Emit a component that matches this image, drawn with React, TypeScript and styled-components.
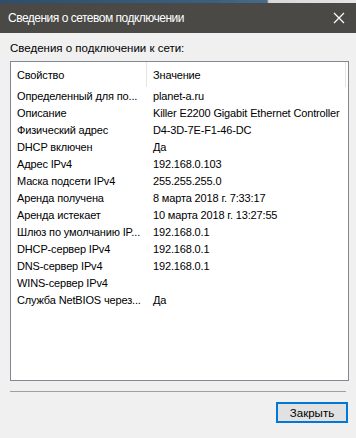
import styled, { createGlobalStyle } from "styled-components";

const GlobalStyle = createGlobalStyle`
    html, body {
        margin: 0;
        padding: 0;
        background: #f0f0f0;
    }
    body {
        font-family: "Liberation Sans", Arial, sans-serif;
    }
`;

const Window = styled.div`
    width: 356px;
    height: 438px;
    display: flex;
    flex-direction: column;
    background: #f0f0f0;
    overflow: hidden;
`;

const TopStrip = styled.div`
    height: 3px;
    background: linear-gradient(to right, #2d4e6e 0%, #3c5f80 60%, #4a6a88 75%, #d8d8d8 75.5%, #e6e6e6 100%);
`;

const TitleBar = styled.div`
    height: 30px;
    background: #4a4946;
    color: #ffffff;
    display: flex;
    flex-direction: row;
    align-items: center;
    justify-content: space-between;
    padding: 0 7px 0 8px;
    font-size: 12px;
    letter-spacing: -0.5px;
`;

const CloseBtn = styled.div`
    width: 20px;
    height: 20px;
    display: flex;
    align-items: center;
    justify-content: center;
`;

const Body = styled.div`
    flex: 1;
    display: flex;
    flex-direction: column;
    padding: 9px 7px 0 10px;
`;

const Caption = styled.div`
    font-size: 11.5px;
    color: #000;
    height: 19px;
`;

const ListBox = styled.div`
    height: 320px;
    background: #ffffff;
    border: 1px solid #828790;
    box-sizing: border-box;
    width: 339px;
    display: flex;
    flex-direction: column;
`;

const Row = styled.div<{ $header?: boolean }>`
    display: flex;
    flex-direction: row;
    height: ${(p) => (p.$header ? "25px" : "17px")};
    align-items: center;
    font-size: 11px;
    letter-spacing: -0.15px;
    color: #000;
`;

const Cell = styled.div<{ $w: number; $header?: boolean }>`
    width: ${(p) => p.$w}px;
    height: 100%;
    box-sizing: border-box;
    padding-left: 6px;
    display: flex;
    align-items: center;
    white-space: nowrap;
    overflow: hidden;
    border-right: ${(p) => (p.$header ? "1px solid #e5e5e5" : "none")};
`;

const Separator = styled.div`
    height: 1px;
    width: 336px;
    background: #a0a0a0;
    margin-top: 10px;
`;

const Footer = styled.div`
    display: flex;
    flex-direction: row;
    justify-content: flex-end;
    padding-top: 10px;
    padding-right: 1px;
`;

const Button = styled.button`
    width: 72px;
    height: 21px;
    box-sizing: border-box;
    border: 2px solid #0078d7;
    background: #e1e1e1;
    font-family: "Liberation Sans", Arial, sans-serif;
    font-size: 11.5px;
    color: #000;
    padding: 0;
    display: flex;
    align-items: center;
    justify-content: center;
`;

const rows: [string, string][] = [
    ["Определенный для по...", "planet-a.ru"],
    ["Описание", "Killer E2200 Gigabit Ethernet Controller"],
    ["Физический адрес", "D4-3D-7E-F1-46-DC"],
    ["DHCP включен", "Да"],
    ["Адрес IPv4", "192.168.0.103"],
    ["Маска подсети IPv4", "255.255.255.0"],
    ["Аренда получена", "8 марта 2018 г. 7:33:17"],
    ["Аренда истекает", "10 марта 2018 г. 13:27:55"],
    ["Шлюз по умолчанию IP...", "192.168.0.1"],
    ["DHCP-сервер IPv4", "192.168.0.1"],
    ["DNS-сервер IPv4", "192.168.0.1"],
    ["WINS-сервер IPv4", ""],
    ["Служба NetBIOS через...", "Да"],
];

export default function App() {
    return (
        <Window>
            <GlobalStyle />
            <TopStrip />
            <TitleBar>
                <span>Сведения о сетевом подключении</span>
                <CloseBtn>
                    <svg width="12" height="12" viewBox="0 0 12 12">
                        <path d="M1 1L11 11M11 1L1 11" stroke="#ffffff" strokeWidth="1.2" />
                    </svg>
                </CloseBtn>
            </TitleBar>
            <Body>
                <Caption>Сведения о подключении к сети:</Caption>
                <ListBox>
                    <Row $header>
                        <Cell $w={136} $header>Свойство</Cell>
                        <Cell $w={199} $header>Значение</Cell>
                    </Row>
                    {rows.map(([k, v], idx) => (
                        <Row key={`row_${idx}`}>
                            <Cell $w={136}>{k}</Cell>
                            <Cell $w={199}>{v}</Cell>
                        </Row>
                    ))}
                </ListBox>
                <Separator />
                <Footer>
                    <Button>Закрыть</Button>
                </Footer>
            </Body>
        </Window>
    );
}
